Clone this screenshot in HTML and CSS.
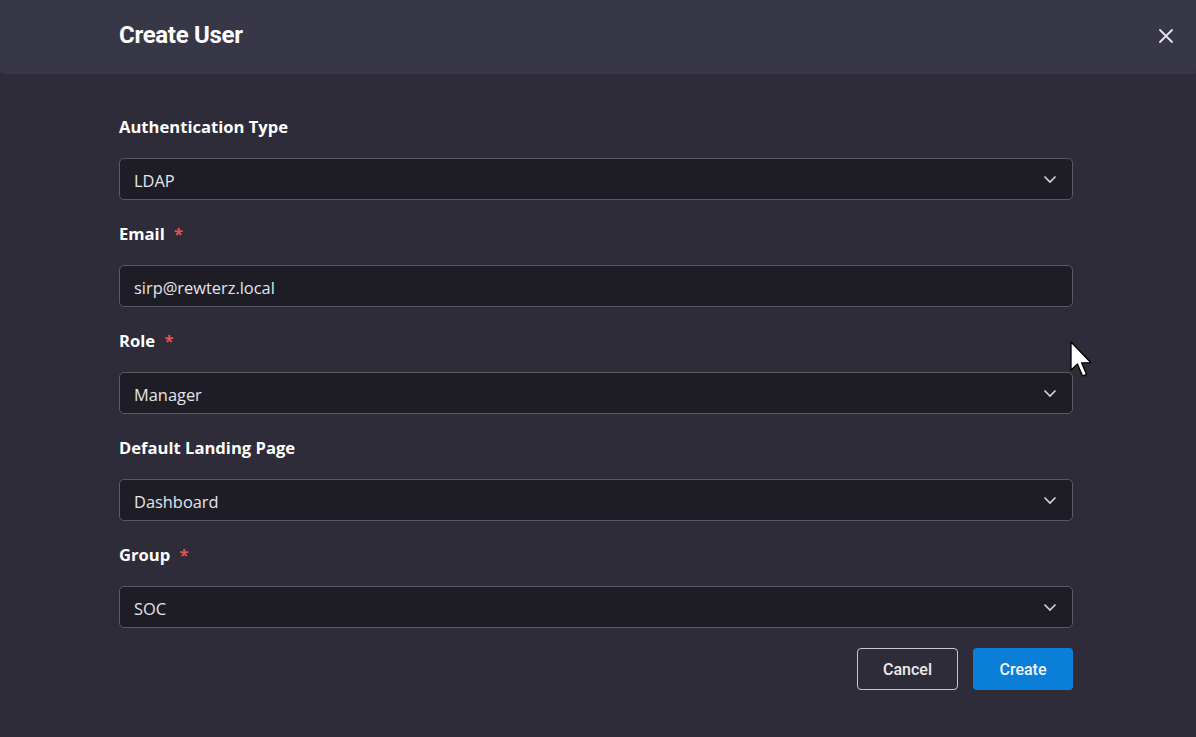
FILE: index.html
```html
<!DOCTYPE html>
<html lang="en">
<head>
    <meta charset="UTF-8">
    <title>Create User</title>
    <link rel="stylesheet" href="styles.css">
</head>
<body>
    <div class="modal">
        <div class="modal-header">
            <h1>Create User</h1>
            <button class="close-btn" type="button" aria-label="Close">
                <svg width="16" height="16" viewBox="0 0 16 16"><path d="M2 2L14 14M14 2L2 14" stroke="#e6e6ea" stroke-width="1.8" stroke-linecap="round"/></svg>
            </button>
        </div>

        <form class="modal-body">
            <div class="field">
                <label>Authentication Type</label>
                <div class="select">LDAP<span class="chev"><svg width="14" height="9" viewBox="0 0 14 9"><path d="M1.5 1.5L7 7L12.5 1.5" fill="none" stroke="#d4d4da" stroke-width="1.6"/></svg></span></div>
            </div>
            <div class="field">
                <label>Email <span class="req">*</span></label>
                <div class="input">sirp@rewterz.local</div>
            </div>
            <div class="field">
                <label>Role <span class="req">*</span></label>
                <div class="select">Manager<span class="chev"><svg width="14" height="9" viewBox="0 0 14 9"><path d="M1.5 1.5L7 7L12.5 1.5" fill="none" stroke="#d4d4da" stroke-width="1.6"/></svg></span></div>
            </div>
            <div class="field">
                <label>Default Landing Page</label>
                <div class="select">Dashboard<span class="chev"><svg width="14" height="9" viewBox="0 0 14 9"><path d="M1.5 1.5L7 7L12.5 1.5" fill="none" stroke="#d4d4da" stroke-width="1.6"/></svg></span></div>
            </div>
            <div class="field">
                <label>Group <span class="req">*</span></label>
                <div class="select">SOC<span class="chev"><svg width="14" height="9" viewBox="0 0 14 9"><path d="M1.5 1.5L7 7L12.5 1.5" fill="none" stroke="#d4d4da" stroke-width="1.6"/></svg></span></div>
            </div>
            <div class="actions">
                <button type="button" class="btn btn-cancel">Cancel</button>
                <button type="button" class="btn btn-create">Create</button>
            </div>
        </form>
    </div>

    <!-- mouse pointer -->
    <svg class="cursor" width="24" height="38" viewBox="0 0 24 38">
        <path d="M1 1V29L7.5 23L12.5 35L16.5 33.3L11.6 21.8H21Z" fill="#fff" stroke="#000" stroke-width="1.3" stroke-linejoin="round"/>
    </svg>
</body>
</html>
```

FILE: styles.css
```css
body {
    margin: 0;
    background-color: #2d2c38;
    font-family: "Open Sans", sans-serif;
    color: #e8e8ec;
    width: 1196px;
    height: 737px;
    overflow: hidden;
    position: relative;
}
.modal {
    width: 1196px;
}
.modal-header {
    height: 74px;
    box-sizing: border-box;
    background-color: #383747;
    border-radius: 0 0 4px 4px;
    display: flex;
    align-items: center;
    justify-content: space-between;
    padding: 0 22px 5px 119px;
}
.modal-header h1 {
    margin: 0;
    font-family: Roboto, sans-serif;
    font-size: 24px;
    font-weight: 700;
    color: #fff;
    letter-spacing: -0.3px;
}
.close-btn {
    background: none;
    border: none;
    padding: 0;
    width: 16px;
    height: 16px;
    cursor: pointer;
    display: flex;
    margin-top: 3px;
}
.modal-body {
    padding: 42px 123px 0 119px;
    display: flex;
    flex-direction: column;
    gap: 23px;
}
.field {
    display: flex;
    flex-direction: column;
    gap: 20px;
}
label {
    font-size: 16.6px;
    font-weight: 700;
    line-height: 22px;
    color: #fff;
}
.req {
    color: #e35353;
    margin-left: 5px;
}
.input,
.select {
    height: 42px;
    box-sizing: border-box;
    background-color: #1e1d26;
    border: 1px solid #5a5964;
    border-radius: 5px;
    padding: 2px 14px 0;
    font-size: 16.4px;
    color: #e4e4ea;
    display: flex;
    align-items: center;
    justify-content: space-between;
}
.chev {
    display: flex;
    margin-right: 1px;
    margin-top: -2px;
}
.actions {
    display: flex;
    justify-content: flex-end;
    gap: 15px;
    margin-top: -3px;
}
.btn {
    height: 42px;
    border-radius: 4px;
    font-family: Roboto, sans-serif;
    font-size: 16px;
    font-weight: 500;
    cursor: pointer;
}
.btn-cancel {
    width: 101px;
    background: transparent;
    border: 1px solid #c8c8cc;
    color: #ececf0;
}
.btn-create {
    width: 100px;
    background-color: #0b7fd8;
    border: none;
    color: #f2f6fa;
}
.cursor {
    position: absolute;
    left: 1070px;
    top: 341px;
}
```
